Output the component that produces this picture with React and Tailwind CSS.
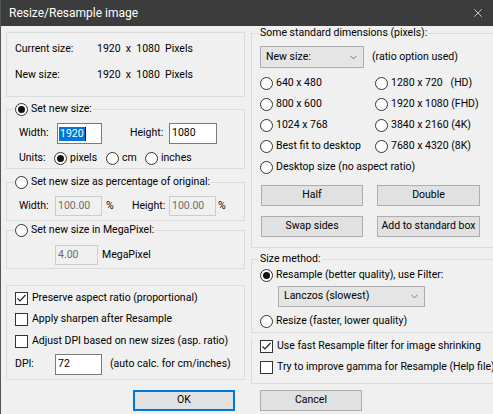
import { ChevronDown, X } from "lucide-react";

const Radio = ({ on = false }) => (
  <span className="w-[13px] h-[13px] shrink-0 rounded-full border border-[#333] bg-white flex items-center justify-center">
    {on && <span className="w-[7px] h-[7px] rounded-full bg-[#111]" />}
  </span>
);

const Check = ({ on = false }) => (
  <span className="w-[13px] h-[13px] shrink-0 border border-[#333] bg-white flex items-center justify-center">
    {on && (
      <svg width="11" height="11" viewBox="0 0 11 11">
        <path d="M1.5 5.5 L4 8 L9.5 2" fill="none" stroke="#222" strokeWidth="1.2" />
      </svg>
    )}
  </span>
);

const RadioLabel = ({ on, children, className = "" }) => (
  <div className={`flex items-center gap-[3px] h-[16px] ${className}`}>
    <Radio on={on} />
    <span className="whitespace-nowrap">{children}</span>
  </div>
);

const CheckLabel = ({ on, children, className = "" }) => (
  <div className={`flex items-center gap-[4px] h-[16px] whitespace-nowrap ${className}`}>
    <Check on={on} />
    <span>{children}</span>
  </div>
);

const Field = ({ value, disabled, w, h = "h-[21px]" }) => (
  <div
    className={`${w} ${h} border flex items-center pl-[2px] ${
      disabled ? "border-[#cccccc] bg-[#f0f0f0] text-[#6d6d6d]" : "border-[#7a7a7a] bg-white"
    }`}
  >
    {value}
  </div>
);

const Btn = ({ children, w = "w-[102px]", focused }) => (
  <div
    className={`${w} h-[21px] flex items-center justify-center whitespace-nowrap bg-[#e1e1e1] ${
      focused ? "border-2 border-[#0078d7]" : "border border-[#adadad]"
    }`}
  >
    {children}
  </div>
);

const Select = ({ label, w, h = "h-[22px]" }) => (
  <div className={`${w} ${h} border border-[#adadad] bg-[#e5e5e5] flex items-center justify-between pl-[5px] pr-[4px]`}>
    <span>{label}</span>
    <ChevronDown size={11} strokeWidth={1.5} className="text-[#444]" />
  </div>
);

const Group = ({ legend, className = "", children }) => (
  <fieldset className={`border border-[#dcdcdc] px-0 m-0 min-w-0 ${className}`}>
    <legend className="ml-[7px] px-[1px] h-[16px] flex items-center">{legend}</legend>
    {children}
  </fieldset>
);

export default function App() {
  return (
    <div className="w-[493px] h-[414px] overflow-hidden bg-[#f0f0f0] border-l border-[#555] text-[10.5px] text-black font-['Segoe_UI','Roboto',sans-serif] leading-none">
      <div className="h-[26px] bg-[#3c3c3c] text-white flex items-center justify-between pl-[8px] pr-[8px] text-[12px]">
        <span>Resize/Resample image</span>
        <X size={14} strokeWidth={1.2} />
      </div>

      <div className="flex pl-[5px] gap-[6px]">
        <div className="w-[239px] shrink-0">
          <div className="mt-[6px] h-[65px] border border-[#dcdcdc] pl-[8px]">
            <div className="flex items-center h-[16px] mt-[8px]">
              <span className="w-[82px]">Current size:</span>
              <span className="whitespace-pre">1920  x  1080  Pixels</span>
            </div>
            <div className="flex items-center h-[16px] mt-[10px]">
              <span className="w-[82px]">New size:</span>
              <span className="whitespace-pre">1920  x  1080  Pixels</span>
            </div>
          </div>

          <Group className="mt-[4px] h-[68px]" legend={<RadioLabel on>Set new size:</RadioLabel>}>
            <div className="flex items-center mt-[6px] pl-[12px]">
              <span className="w-[38px]">Width:</span>
              <div className="w-[45px] h-[21px] border border-[#7a7a7a] bg-white flex items-center pl-[1px]">
                <span className="bg-[#0078d7] text-white px-[1px] leading-[14px]">1920</span>
                <span className="w-px h-[14px] bg-black" />
              </div>
              <span className="ml-[28px] w-[39px]">Height:</span>
              <Field value="1080" w="w-[48px]" />
            </div>
            <div className="flex items-center h-[16px] mt-[6px] pl-[12px]">
              <span className="w-[35px]">Units:</span>
              <RadioLabel on className="w-[52px]">pixels</RadioLabel>
              <RadioLabel className="w-[39px]">cm</RadioLabel>
              <RadioLabel>inches</RadioLabel>
            </div>
          </Group>

          <Group className="mt-[5px] h-[47px]" legend={<RadioLabel>Set new size as percentage of original:</RadioLabel>}>
            <div className="flex items-center mt-[6px] pl-[12px]">
              <span className="w-[36px]">Width:</span>
              <Field value="100.00" disabled w="w-[47px]" h="h-[20px]" />
              <span className="ml-[4px] w-[26px]">%</span>
              <span className="w-[37px]">Height:</span>
              <Field value="100.00" disabled w="w-[47px]" h="h-[20px]" />
              <span className="ml-[2px]">%</span>
            </div>
          </Group>

          <Group className="mt-[1px] h-[47px]" legend={<RadioLabel>Set new size in MegaPixel:</RadioLabel>}>
            <div className="flex items-center mt-[7px] pl-[48px]">
              <Field value="4.00" disabled w="w-[43px]" h="h-[20px]" />
              <span className="ml-[4px]">MegaPixel</span>
            </div>
          </Group>

          <div className="mt-[16px] h-[95px] border border-[#dcdcdc] pl-[8px]">
            <CheckLabel on className="mt-[4px]">Preserve aspect ratio (proportional)</CheckLabel>
            <CheckLabel className="mt-[5px]">Apply sharpen after Resample</CheckLabel>
            <CheckLabel className="mt-[6px]">Adjust DPI based on new sizes (asp. ratio)</CheckLabel>
            <div className="flex items-center mt-[5px]">
              <span className="w-[40px]">DPI:</span>
              <Field value="72" w="w-[47px]" />
              <span className="ml-[8px]">(auto calc. for cm/inches)</span>
            </div>
          </div>
        </div>

        <div className="w-[250px] shrink-0">
          <fieldset className="border border-[#dcdcdc] px-0 m-0 min-w-0 h-[222px]">
            <legend className="ml-[7px] px-[1px] h-[14px] flex items-center">Some standard dimensions (pixels):</legend>
            <div className="flex items-center mt-[6px] pl-[8px]">
              <Select label="New size:" w="w-[104px]" />
              <span className="ml-[8px]">(ratio option used)</span>
            </div>
            <div className="grid grid-cols-[115px_1fr] mt-[5px] pl-[8px]">
              <div className="h-[21px] flex items-center"><RadioLabel>640 x 480</RadioLabel></div>
              <div className="h-[21px] flex items-center"><RadioLabel><span className="whitespace-pre">1280 x 720   (HD)</span></RadioLabel></div>
              <div className="h-[21px] flex items-center"><RadioLabel>800 x 600</RadioLabel></div>
              <div className="h-[21px] flex items-center"><RadioLabel>1920 x 1080 (FHD)</RadioLabel></div>
              <div className="h-[21px] flex items-center"><RadioLabel>1024 x 768</RadioLabel></div>
              <div className="h-[21px] flex items-center"><RadioLabel>3840 x 2160 (4K)</RadioLabel></div>
              <div className="h-[21px] flex items-center"><RadioLabel>Best fit to desktop</RadioLabel></div>
              <div className="h-[21px] flex items-center"><RadioLabel>7680 x 4320 (8K)</RadioLabel></div>
              <div className="h-[21px] flex items-center col-span-2"><RadioLabel>Desktop size (no aspect ratio)</RadioLabel></div>
            </div>
            <div className="flex gap-[14px] mt-[7px] pl-[9px]">
              <Btn>Half</Btn>
              <Btn w="w-[103px]">Double</Btn>
            </div>
            <div className="flex gap-[14px] mt-[10px] pl-[9px]">
              <Btn>Swap sides</Btn>
              <Btn w="w-[103px]">Add to standard box</Btn>
            </div>
          </fieldset>

          <fieldset className="border border-[#dcdcdc] px-0 m-0 min-w-0 mt-[4px] h-[81px]">
            <legend className="ml-[7px] px-[1px] h-[14px] flex items-center">Size method:</legend>
            <div className="pl-[8px]">
              <RadioLabel on className="mt-[1px]">Resample (better quality), use Filter:</RadioLabel>
              <div className="mt-[3px] pl-[18px]">
                <Select label="Lanczos (slowest)" w="w-[147px]" h="h-[21px]" />
              </div>
              <RadioLabel className="mt-[6px]">Resize (faster, lower quality)</RadioLabel>
            </div>
          </fieldset>

          <div className="h-[46px] border border-t-0 border-[#dcdcdc] pl-[8px]">
            <CheckLabel on className="mt-[5px]">Use fast Resample filter for image shrinking</CheckLabel>
            <CheckLabel className="mt-[5px]">Try to improve gamma for Resample (Help file)</CheckLabel>
          </div>
        </div>
      </div>

      <div className="flex gap-[25px] pl-[132px] mt-[6px]">
        <Btn focused>OK</Btn>
        <Btn>Cancel</Btn>
      </div>
    </div>
  );
}
